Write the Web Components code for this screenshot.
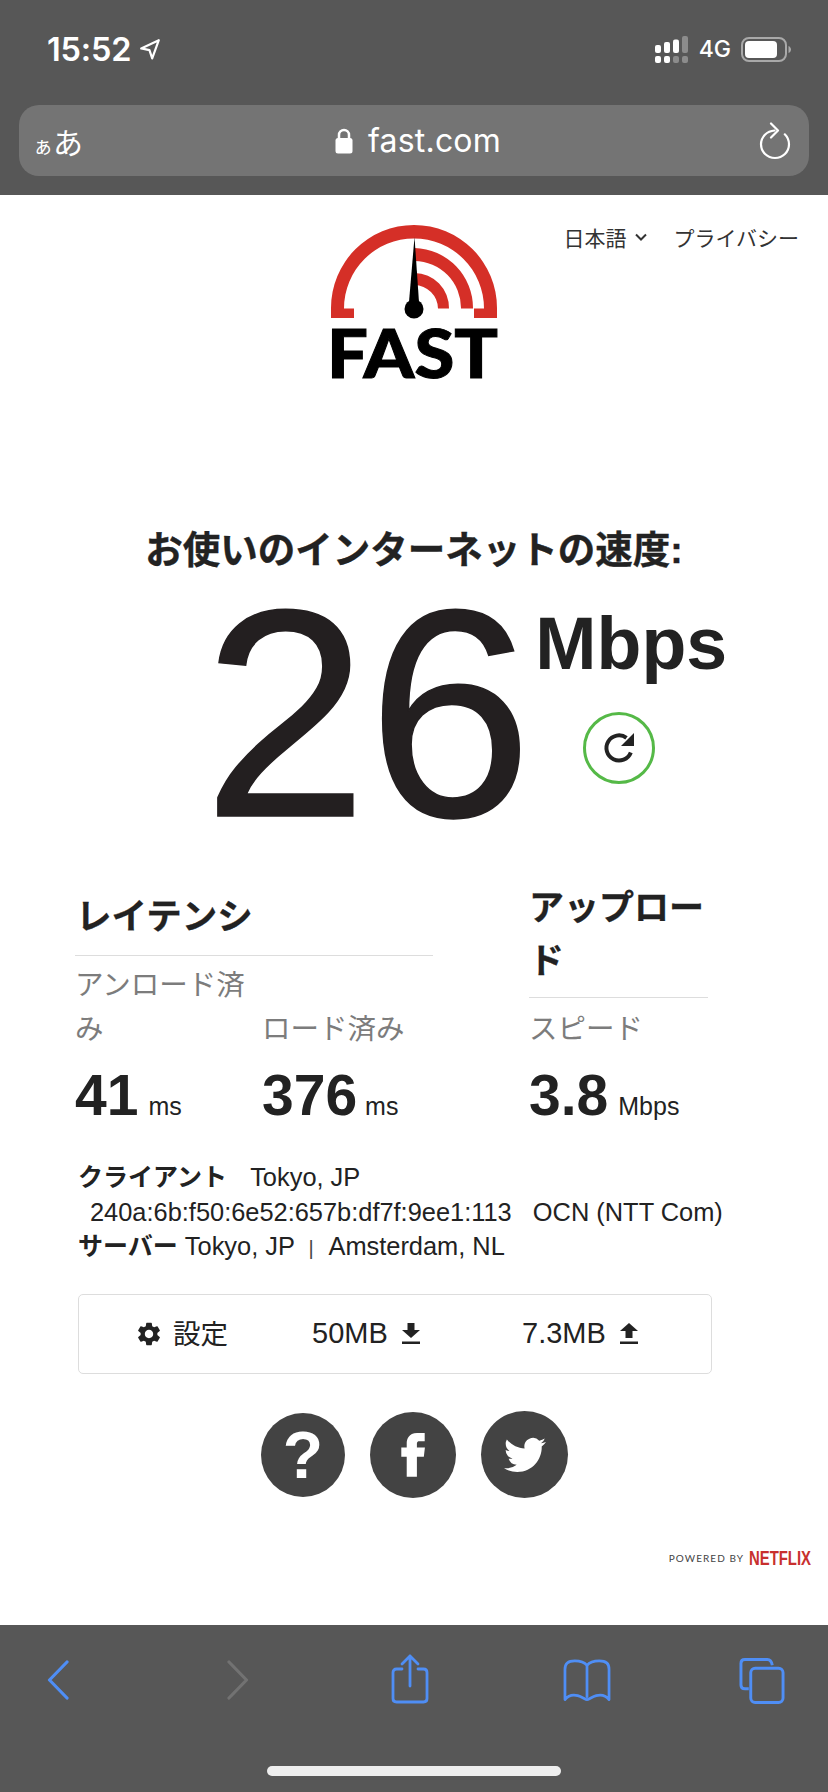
<!DOCTYPE html>
<html lang="ja"><head><meta charset="utf-8"><title>fast.com</title>
<style>
html,body{margin:0;padding:0;background:#fff}
body{font-family:"Liberation Sans","Noto Sans CJK JP",sans-serif;color:#222}
</style></head><body>
<phone-screen>
  <browser-top slot="top"></browser-top>
  <fast-header></fast-header>
  <speed-result value="26" unit="Mbps"></speed-result>
  <metrics-panel></metrics-panel>
  <client-info></client-info>
  <settings-bar></settings-bar>
  <social-links></social-links>
  <powered-by></powered-by>
  <browser-toolbar slot="bottom"></browser-toolbar>
</phone-screen>
<script>
function def(name, html){
  customElements.define(name, class extends HTMLElement{
    constructor(){super();this.attachShadow({mode:"open"}).innerHTML=html;}
  });
}
const FONT='"Liberation Sans","Noto Sans CJK JP",sans-serif';

def("phone-screen",`<style>
:host{display:flex;flex-direction:column;width:828px;height:1792px;overflow:hidden;background:#fff}
main{flex:1;min-height:0;display:flex;flex-direction:column}
</style><slot name="top"></slot><main><slot></slot></main><slot name="bottom"></slot>`);

def("browser-top",`<style>
:host{display:block;height:195px;background:#575757;color:#fff;box-sizing:border-box;padding:0 19px 0 19px;font-family:Inter,"Noto Sans CJK JP",sans-serif}
.status{height:105px;box-sizing:border-box;padding:31px 18px 0 28px;display:flex;justify-content:space-between;align-items:flex-start}
.left{display:flex;align-items:center;gap:8px;height:36px}
.time{font-size:32.500px;font-weight:600;letter-spacing:-.2px}
.right{display:flex;align-items:center;height:36px}
.g{font-size:23px;font-weight:500;margin:0 10px 0 10px}
.url{height:71px;border-radius:20px;background:#747474;display:flex;align-items:center;padding:0 18px 0 14px}
.aa{font-family:"Noto Sans CJK JP",sans-serif;font-size:30px;line-height:1;display:flex;align-items:flex-end}
.aa small{font-size:20px}
.mid{flex:1;display:flex;justify-content:center;align-items:center;gap:15px;font-size:32px;letter-spacing:.2px;margin-left:-6px}
svg{display:block}
</style>
<div class="status"><div class="left"><span class="time">15:52</span>
<svg width="22" height="22" viewBox="0 0 20 20" fill="none" stroke="#fff" stroke-width="2" stroke-linejoin="round"><path d="M18 2 2 9.500l7.500 1.500L12 18.500z"/></svg></div>
<div class="right">
<svg width="34" height="27" viewBox="0 0 34 27"><g fill="#fff"><rect x="0" y="9" width="6" height="8" rx="2"/><rect x="9" y="6" width="6" height="11" rx="2"/><rect x="18" y="3.500" width="6" height="13.500" rx="2"/><rect x="0" y="20" width="6" height="7" rx="2"/><rect x="9" y="20" width="6" height="7" rx="2"/></g><g fill="#8c8c8c"><rect x="27" y="0" width="6" height="17" rx="2"/><rect x="18" y="20" width="6" height="7" rx="2"/><rect x="27" y="20" width="6" height="7" rx="2"/></g></svg>
<span class="g">4G</span>
<svg width="50" height="25" viewBox="0 0 50 25"><rect x="1" y="1" width="44" height="23" rx="7" fill="none" stroke="#a9a9a9" stroke-width="2"/><rect x="4" y="4" width="32" height="17" rx="4" fill="#fff"/><path d="M47.500 9v7c1.500-.5 2.500-2 2.500-3.500s-1-3-2.500-3.500z" fill="#a9a9a9"/></svg>
</div></div>
<div class="url"><span class="aa"><small>ぁ</small>あ</span>
<div class="mid"><svg width="18" height="26" viewBox="0 0 18 26"><path d="M4 11V7a5 5 0 0 1 10 0v4" fill="none" stroke="#fff" stroke-width="2.500"/><rect x="0.500" y="10" width="17" height="15.500" rx="2.500" fill="#fff"/></svg><span>fast.com</span></div>
<svg width="32" height="38" viewBox="0 0 32 38" fill="none" stroke="#fff" stroke-width="2.200" stroke-linecap="round" stroke-linejoin="round"><path d="M15.500 8.500C8 9 2 14.800 2 22.300 2 30 8.200 36 16 36s14-6 14-13.700c0-4-1.600-7.400-4.200-10"/><path d="M12 1.500 19 8.500 12 15.500"/></svg>
</div>`);

def("fast-header",`<style>
:host{display:grid;grid-template-columns:1fr 166px 1fr;padding-top:29px;height:156px;font-family:${FONT}}
svg{display:block;overflow:visible}
nav{display:flex;justify-content:flex-end;align-items:center;height:26px;padding:0 29px 0 0;font-size:21px;color:#333;gap:26px}
.lang{display:flex;align-items:center;gap:9px}
</style><div></div>
<svg width="166" height="175" viewBox="0 0 166 175" aria-label="FAST"><g fill="#d52f27"><path d="M0 94V84A83 83 0 0 1 166 84V94H143V84.500H153A70 70 0 0 0 13 84.500H23V94Z"/><path d="M83.500 24A60 60 0 0 1 142 84.500H130A47 47 0 0 0 83.500 37Z"/><path d="M83.500 49A35 35 0 0 1 118 84.500H107A24 24 0 0 0 83.500 61Z"/></g><path d="M83.500 13 88 78H78Z" fill="#000"/><circle cx="83" cy="85" r="9.500" fill="#000"/><text x="-4" y="153.500" font-family="Lato" font-weight="900" font-size="67" textLength="171" lengthAdjust="spacingAndGlyphs" stroke="#000" stroke-width="1">FAST</text></svg>
<nav><span class="lang">日本語<svg width="12" height="8" viewBox="0 0 12 8" fill="none" stroke="#333" stroke-width="2"><path d="M1 1.500 6 6.500 11 1.500"/></svg></span><span>プライバシー</span></nav>`);

def("speed-result",`<style>
:host{display:block;font-family:${FONT};color:#231f20}
h1{margin:0;padding-top:147px;font-size:37.500px;line-height:46px;font-weight:700;text-align:center;color:#222;height:46px;-webkit-text-stroke:.4px #222}
.row{display:flex;padding-left:203px;height:262px;margin-top:10px}
.num{font-size:296px;line-height:262px;height:262px;-webkit-text-stroke:1.500px #231f20}
.side{margin-left:3px;display:flex;flex-direction:column;align-items:center;width:192px}
.unit{font-size:73.500px;font-weight:700;line-height:80px;margin-top:21px;color:#222}
.btn{width:72px;height:72px;box-sizing:border-box;border:3px solid #55b947;border-radius:50%;display:flex;align-items:center;justify-content:center;margin:28px 24px 0 0}
svg{display:block}
</style><h1>お使いのインターネットの速度:</h1>
<div class="row"><div class="num">26</div><div class="side"><div class="unit">Mbps</div><div class="btn"><svg width="34" height="34" viewBox="0 0 34 34"><path d="M28.800 21.500A12.600 12.600 0 1 1 24.500 6.800" fill="none" stroke="#222" stroke-width="4"/><path d="M32 2v13H19z" fill="#222"/></svg></div></div></div>`);

def("metrics-panel",`<style>
:host{display:flex;font-family:${FONT};padding-left:75px;margin-top:49px;color:#222;gap:96px}
.g{display:flex;flex-direction:column}
.lat{width:358px}.up{width:179px}
h2{margin:0;font-size:35.500px;font-weight:700;line-height:53px;color:#222;border-bottom:1px solid #ddd;padding:0 0 0 1px;height:62px;box-sizing:border-box;-webkit-text-stroke:.3px #222}
.lat h2{line-height:47px}
.up h2{height:auto;padding:0 0 10px 0;margin-top:-13px;font-size:35px}
.up .l{margin-top:9px}
.cols{display:flex;flex:1}
.m{display:flex;flex-direction:column;justify-content:flex-end}
.m.a{width:187px}.m.a .l{width:173px}
.l{font-size:28.500px;line-height:44px;color:#7c7c7c}
.v{font-size:57px;font-weight:700;line-height:60px;margin-top:14px;white-space:nowrap}
.v span{font-size:25px;font-weight:400;margin-left:10px}
</style>
<div class="g lat"><h2>レイテンシ</h2><div class="cols"><div class="m a"><div class="l">アンロード済み</div><div class="v">41<span>ms</span></div></div><div class="m"><div class="l">ロード済み</div><div class="v">376<span style="margin-left:8px">ms</span></div></div></div></div>
<div class="g up"><h2>アップロード</h2><div class="cols"><div class="m"><div class="l">スピード</div><div class="v">3.8<span>Mbps</span></div></div></div></div>`);

def("client-info",`<style>
:host{display:block;font-family:${FONT};font-size:25.400px;line-height:34.500px;color:#222;padding-left:78px;margin-top:24px;white-space:pre}
b{font-weight:700;font-size:25px}.ip{padding-left:12px}
.c{margin-right:2px}.p{font-size:20px;margin-right:2px;color:#444}
</style><div><b class="c">クライアント</b>   Tokyo, JP</div><div class="ip">240a:6b:f50:6e52:657b:df7f:9ee1:113   OCN (NTT Com)</div><div><b>サーバー</b> Tokyo, JP  <span class="p">|</span>  Amsterdam, NL</div>`);

def("settings-bar",`<style>
:host{display:flex;box-sizing:border-box;width:634px;height:80px;margin:28px 0 0 78px;border:1px solid #ddd;border-radius:5px;font-family:${FONT};font-size:29px;color:#222;align-items:center}
span{display:flex;align-items:center}
.s{margin-left:56px;width:177px;gap:10px;font-size:27.500px}
.s i{font-style:normal;display:block;margin-top:-3px}
.d{gap:13px}.d.a{width:210px}
svg{display:block}
</style><span class="s"><svg width="28" height="28" viewBox="0 0 24 24" fill="#222"><path d="M19.140 12.940c.04-.3.06-.61.06-.94 0-.32-.02-.64-.07-.94l2.030-1.580c.18-.14.23-.41.12-.61l-1.920-3.320c-.12-.22-.37-.29-.59-.22l-2.390.96c-.5-.38-1.030-.7-1.620-.94l-.36-2.540c-.04-.24-.24-.41-.48-.41h-3.840c-.24 0-.43.17-.47.41l-.36 2.540c-.59.24-1.130.57-1.620.94l-2.390-.96c-.22-.08-.47 0-.59.22L2.740 8.870c-.12.21-.08.47.12.61l2.030 1.580c-.05.3-.09.63-.09.94s.02.64.07.94l-2.030 1.580c-.18.14-.23.41-.12.61l1.920 3.320c.12.22.37.29.59.22l2.390-.96c.5.38 1.030.7 1.620.94l.36 2.540c.05.24.24.41.48.41h3.840c.24 0 .44-.17.47-.41l.36-2.540c.59-.24 1.130-.56 1.620-.94l2.390.96c.22.08.47 0 .59-.22l1.920-3.320c.12-.22.07-.47-.12-.61l-2.010-1.580zM12 15.600c-1.980 0-3.600-1.620-3.600-3.600s1.620-3.600 3.600-3.600 3.600 1.620 3.600 3.600-1.620 3.600-3.600 3.600z"/></svg><i>設定</i></span>
<span class="d a">50MB<svg width="20" height="22" viewBox="0 0 20 22" fill="#222"><path d="M6.500 0h7v7H19L10 15 1 7h5.500zM1 18.500h18V21H1z"/></svg></span>
<span class="d">7.3MB<svg width="20" height="22" viewBox="0 0 20 22" fill="#222"><path d="M10 0l9 8h-5.500v7h-7V8H1zM1 18.500h18V21H1z"/></svg></span>`);

def("social-links",`<style>
:host{display:flex;align-items:center;height:86px;margin-top:38px;padding-left:261px;gap:25px;font-family:${FONT}}
a{display:flex;align-items:center;justify-content:center;border-radius:50%;background:#434343;color:#fff;text-decoration:none}
.q{width:84px;height:84px;font-size:66px;font-weight:700;line-height:1}
.f{width:86px;height:86px}.t{width:87px;height:87px}
</style><a class="q">?</a><a class="f"><svg width="52" height="52" viewBox="0 0 24 24" fill="#fff"><path d="M13.800 8.500V6.700c0-.9.600-1.100 1-1.100h2.600V1.800h-3.500c-3.900 0-4.800 2.900-4.800 4.800v1.900H6.600v4.300h2.500V22h4.700v-9.200h3.200l.5-4.300z"/></svg></a><a class="t"><svg width="42" height="42" viewBox="0 0 24 24" fill="#fff"><path d="M23.953 4.570a10 10 0 01-2.825.775 4.958 4.958 0 002.163-2.723c-.951.555-2.005.959-3.127 1.184a4.920 4.920 0 00-8.384 4.482C7.690 8.095 4.067 6.130 1.640 3.162a4.822 4.822 0 00-.666 2.475c0 1.710.870 3.213 2.188 4.096a4.904 4.904 0 01-2.228-.616v.060a4.923 4.923 0 003.946 4.827 4.996 4.996 0 01-2.212.085 4.936 4.936 0 004.604 3.417 9.867 9.867 0 01-6.102 2.105c-.390 0-.779-.023-1.170-.067a13.995 13.995 0 007.557 2.209c9.053 0 13.998-7.496 13.998-13.985 0-.210 0-.420-.015-.630A9.935 9.935 0 0024 4.590z"/></svg></a>`);

def("powered-by",`<style>
:host{display:flex;justify-content:flex-end;align-items:center;gap:4px;height:28px;margin-top:46px;padding-right:17px;font-family:Lato,sans-serif;color:#444}
span{font-size:10px;letter-spacing:1.050px;white-space:nowrap;flex:none;display:block;line-height:16px;padding:0 1px}
svg{display:block;overflow:visible}
</style><span>POWERED BY</span><svg width="62" height="28" viewBox="0 0 62 28"><text x="0" y="21" font-family="Liberation Sans" font-weight="700" font-size="20" fill="#c8302e" textLength="62" lengthAdjust="spacingAndGlyphs">NETFLIX</text></svg>`);

def("browser-toolbar",`<style>
:host{display:flex;flex-direction:column;height:167px;background:#575757}
.icons{height:141px;display:flex;align-items:flex-start;box-sizing:border-box;padding:29px 0 0 47px}
svg{display:block;flex:none}
.home{width:294px;height:10px;border-radius:5px;background:#eee;margin-left:267px}
</style><div class="icons">
<svg style="margin-top:6px" width="22" height="40" viewBox="0 0 22 40" fill="none" stroke="#4f8ef5" stroke-width="3.200" stroke-linecap="round" stroke-linejoin="round"><path d="M20 2 2.500 20 20 38"/></svg>
<svg style="margin:6px 0 0 158px" width="22" height="40" viewBox="0 0 22 40" fill="none" stroke="#727272" stroke-width="3.200" stroke-linecap="round" stroke-linejoin="round"><path d="M2 2 19.500 20 2 38"/></svg>
<svg style="margin-left:142px" width="38" height="50" viewBox="0 0 38 50" fill="none" stroke="#4f8ef5" stroke-width="2.800" stroke-linecap="round" stroke-linejoin="round"><path d="M19 2V32M11 10 19 2 27 10"/><path d="M11 15H5.500Q2 15 2 18.500V44.500Q2 48 5.500 48H32.500Q36 48 36 44.500V18.500Q36 15 32.500 15H27"/></svg>
<svg style="margin:5px 0 0 134px" width="48" height="43" viewBox="0 0 49 43" fill="none" stroke="#4f8ef5" stroke-width="2.800" stroke-linecap="round" stroke-linejoin="round"><path d="M24.500 6V38M24.500 6C22 3 18 1.500 12 1.500 5 1.500 2 4 2 10V41C6 36 11 36 15 37 19 38 23 41 24.500 41 26 41 30 38 34 37 38 36 43 36 47 41V10C47 4 44 1.500 37 1.500 31 1.500 27 3 24.500 6Z"/></svg>
<svg style="margin:3px 0 0 128px" width="46" height="47" viewBox="0 0 47 47" fill="none" stroke="#4f8ef5" stroke-width="3" stroke-linejoin="round"><path d="M10 32H6Q2 32 2 28V6Q2 2 6 2H29Q33 2 34 8"/><rect x="12" y="11" width="33" height="35" rx="4.500"/></svg>
</div><div class="home"></div>`);
</script>
</body></html>
